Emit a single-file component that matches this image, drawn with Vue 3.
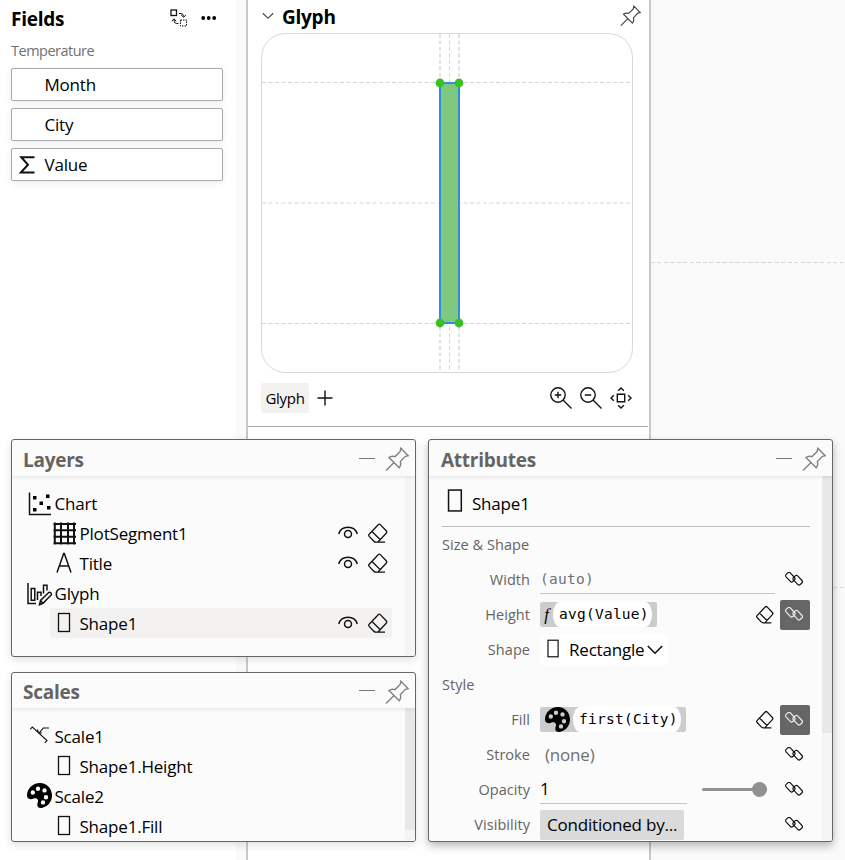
<script setup>
const fields = [
  { name: 'Month', numeric: false },
  { name: 'City', numeric: false },
  { name: 'Value', numeric: true },
]
const layers = [
  { name: 'Chart', icon: 'chart', child: false },
  { name: 'PlotSegment1', icon: 'grid', child: true },
  { name: 'Title', icon: 'letter', child: true },
  { name: 'Glyph', icon: 'glyph', child: false },
  { name: 'Shape1', icon: 'rect', child: true, selected: true },
]
const scales = [
  { name: 'Scale1', icon: 'scale', child: false },
  { name: 'Shape1.Height', icon: 'rect', child: true },
  { name: 'Scale2', icon: 'palette', child: false },
  { name: 'Shape1.Fill', icon: 'rect', child: true },
]
const handles = [[179, 50], [198, 50], [179, 290], [198, 290]]
</script>

<template>
  <svg class="sprite" width="0" height="0">
    <symbol id="pin" viewBox="0 0 24 24">
      <path d="M1 23.500 9 15.500M15.800 1.200 23.300 8.700 20.400 9.300 15.300 14.600Q16.500 18.200 14.200 20.800L4 10.600Q6.300 8.500 10 9.600L15.200 4.400Z" />
    </symbol>
    <symbol id="eye" viewBox="0 0 20 20">
      <path d="M.7 11C2 6.500 5.500 4.200 10 4.200S18 6.500 19.300 11" />
      <circle cx="10" cy="11" r="3.500" />
    </symbol>
    <symbol id="eraser" viewBox="0 0 20 20">
      <path d="M9 19.200H17M10.200 18.700 18.200 10.200Q19.300 9 18.200 7.800L12.300 1.600Q11.300.6 10.200 1.700L1.200 11.200Q.2 12.300 1.200 13.400L5.800 18.200Q6.800 19.200 8 19.200H9.700ZM4 8.500 12.300 16.700" />
    </symbol>
    <symbol id="link" viewBox="0 0 18 14">
      <rect x="0.400" y="2.300" width="9.800" height="5.800" rx="1.800" transform="rotate(47 5.300 5.200)" />
      <rect x="7.800" y="5.300" width="9.800" height="5.800" rx="1.800" transform="rotate(47 12.700 8.200)" />
    </symbol>
    <symbol id="rect" viewBox="0 0 25 25">
      <rect x="6.500" y="3.500" width="11" height="18" />
    </symbol>
    <symbol id="chart" viewBox="0 0 25 25">
      <path d="M2.500 1.500V23.500H24" />
      <path class="solid" d="M6 5h3.500v3.500H6zM6 17h3.500v3.500H6zM12.500 10.500H16V14h-3.500zM19 3.500h3.500V7H19zM20 15h3.500v3.500H20z" />
    </symbol>
    <symbol id="grid" viewBox="0 0 25 25">
      <path d="M2.800 1.500V23.500M9 1.500V23.500M16 1.500V23.500M22 1.500V23.500M1.500 3H24M1.500 9.300H24M1.500 15.800H24M1.500 22.300H24" />
    </symbol>
    <symbol id="letter" viewBox="0 0 25 25">
      <path d="M5 21.500 11.700 2.500H12.300L19 21.500M7.300 15H16.700" />
    </symbol>
    <symbol id="glyph" viewBox="0 0 25 25">
      <path d="M1 2V22.500H9M4.200 7.500H7.800V19.200H4.200ZM10.500 19V11.200H14V15M16.500 12.500V4.200H20V9.500M12.500 23.700 13.500 19.500 21.500 11.700Q22.700 10.700 24 12T23.800 14.300L16 22.300ZM13.500 19.500 16 22.300" />
    </symbol>
    <symbol id="scale" viewBox="0 0 25 25">
      <path d="M3.200 6.300 5.300 4 20 17.500 17.800 19.800M12.500 9.700 16.300 5H22M10.500 6.500 11.500 10H14.800" />
    </symbol>
    <symbol id="palette" viewBox="0 0 25 25">
      <path class="solid" fill-rule="evenodd" d="M13 0C5.500 0 0 5.700 0 12.500C0 16 3.600 17.200 6.500 15.600C9.300 14.300 12 16.300 10.800 19.300C9.600 22.400 10.800 25 13.300 25C20 24.700 25 19.200 25 12.500S20 0 13 0ZM5.800 7.300a2.200 2.200 0 1 1 0 4.400 2.200 2.200 0 0 1 0-4.400ZM11 3.500a2.200 2.200 0 1 1 0 4.400 2.200 2.200 0 0 1 0-4.400ZM17.500 5.200a2.200 2.200 0 1 1 0 4.400 2.200 2.200 0 0 1 0-4.400ZM19 12a2.200 2.200 0 1 1 0 4.400 2.200 2.200 0 0 1 0-4.400ZM16 17.200a2.200 2.200 0 1 1 0 4.400 2.200 2.200 0 0 1 0-4.400Z" />
    </symbol>
  </svg>

  <div class="app">
    <aside class="fields">
      <header class="fields-head">
        <h2>Fields</h2>
        <svg class="swap" width="18" height="18" viewBox="0 0 18 18">
          <rect x="1" y="1" width="5.500" height="5.500" stroke-width="1.300" />
          <path d="M9 4.500H11Q13.500 4.500 13.500 7.500M11.200 6 13.500 8.300 15.800 6M8.500 14.500H6.500Q4 14.500 4 11M1.800 12.300 4 9.800 6.200 12.300" />
          <rect x="10.500" y="11" width="6" height="6" stroke-dasharray="1.500 1" />
        </svg>
        <svg class="dots" width="16" height="4" viewBox="0 0 16 4">
          <circle cx="2.200" cy="2" r="1.900" /><circle cx="7.700" cy="2" r="1.900" /><circle cx="13.200" cy="2" r="1.900" />
        </svg>
      </header>
      <p class="table-name">Temperature</p>
      <div class="field-list">
        <div v-for="f in fields" :key="f.name" class="field">
          <span class="field-icon">
            <svg v-if="f.numeric" width="16" height="18" viewBox="0 0 16 18">
              <path d="M15.500 1.200H2.200L9 8.800 1.800 16.500H15.500" />
            </svg>
          </span>
          <span class="txt">{{ f.name }}</span>
        </div>
      </div>
    </aside>

    <main class="glyph-pane">
      <section class="glyph-editor">
        <header class="glyph-head">
          <svg class="chevron" width="12" height="8" viewBox="0 0 12 8"><path d="M.8 1.200 6 6.200 11.200 1.200" /></svg>
          <h2>Glyph</h2>
          <svg class="icon head-pin" width="21" height="21"><use href="#pin" /></svg>
        </header>
        <svg class="glyph-canvas" width="372" height="340" viewBox="0 0 372 340">
          <rect class="frame" x=".5" y=".5" width="371" height="339" rx="24" />
          <path class="guide" d="M1 49.500H371M1 170H371M1 290.500H371M188.500 1V337" />
          <path class="guide wide" d="M179 1V337M198 1V337" />
          <rect class="mark" x="179" y="50" width="19" height="240" />
          <circle v-for="(h, i) in handles" :key="i" class="handle" :cx="h[0]" :cy="h[1]" r="4.400" />
        </svg>
        <footer class="glyph-tools">
          <span class="tab">Glyph</span>
          <svg class="tool plus" width="16" height="16" viewBox="0 0 16 16"><path d="M8 .5V15.500M.5 8H15.500" /></svg>
          <svg class="tool" width="22" height="22" viewBox="0 0 22 22">
            <circle cx="8" cy="8" r="7.200" /><path d="M13 13 21.500 21.500M4.800 8H11.200M8 4.800V11.200" />
          </svg>
          <svg class="tool" width="22" height="22" viewBox="0 0 22 22">
            <circle cx="8" cy="8" r="7.200" /><path d="M13 13 21.500 21.500M4.800 8H11.200" />
          </svg>
          <svg class="tool" width="22" height="22" viewBox="0 0 22 22">
            <path d="M7.300 7.300H14.700V14.700H7.300ZM8.200 3.800 11 1 13.800 3.800M8.200 18.200 11 21 13.800 18.200M3.800 8.200 1 11 3.800 13.800M18.200 8.200 21 11 18.200 13.800" />
          </svg>
        </footer>
      </section>
    </main>

    <div class="chart-canvas">
      <div class="canvas-guide"></div>
      <div class="canvas-guide"></div>
    </div>

    <section class="window layers">
      <header class="window-head">
        <h2>Layers</h2>
        <span class="minimise"></span>
        <svg class="icon" width="24" height="24"><use href="#pin" /></svg>
      </header>
      <div class="window-body">
        <div class="tree">
          <div v-for="n in layers" :key="n.name" class="node" :class="{ child: n.child, selected: n.selected }">
            <svg class="icon node-icon" :class="n.icon" width="25" height="25"><use :href="'#' + n.icon" /></svg>
            <span class="txt">{{ n.name }}</span>
            <template v-if="n.child">
              <svg class="icon eye" width="20" height="20"><use href="#eye" /></svg>
              <svg class="icon" width="20" height="20"><use href="#eraser" /></svg>
            </template>
          </div>
        </div>
        <div class="track"></div>
      </div>
    </section>

    <section class="window scales">
      <header class="window-head">
        <h2>Scales</h2>
        <span class="minimise"></span>
        <svg class="icon" width="24" height="24"><use href="#pin" /></svg>
      </header>
      <div class="window-body">
        <div class="tree">
          <div v-for="n in scales" :key="n.name" class="node" :class="{ child: n.child }">
            <svg class="icon node-icon" :class="n.icon" width="25" height="25"><use :href="'#' + n.icon" /></svg>
            <span class="txt">{{ n.name }}</span>
          </div>
        </div>
        <div class="track"><div class="thumb"></div></div>
      </div>
    </section>

    <section class="window attributes">
      <header class="window-head">
        <h2>Attributes</h2>
        <span class="minimise"></span>
        <svg class="icon" width="24" height="24"><use href="#pin" /></svg>
      </header>
      <div class="window-body">
        <div class="form">
          <div class="object-name">
            <svg class="icon" width="29" height="29"><use href="#rect" /></svg>
            <span class="txt">Shape1</span>
          </div>
          <div class="group">Size &amp; Shape</div>
          <div class="attr">
            <label>Width</label>
            <div class="control"><span class="input mono muted">(auto)</span></div>
            <span class="bind"><svg class="icon" width="18" height="14"><use href="#link" /></svg></span>
          </div>
          <div class="attr">
            <label>Height</label>
            <div class="control"><span class="expr"><i class="func">f</i><span class="mono code">avg(Value)</span></span></div>
            <svg class="icon clear" width="18" height="19"><use href="#eraser" /></svg>
            <span class="bind bound"><svg class="icon" width="18" height="14"><use href="#link" /></svg></span>
          </div>
          <div class="attr">
            <label>Shape</label>
            <div class="control">
              <span class="select">
                <svg class="icon" width="25" height="23"><use href="#rect" /></svg>
                <span class="txt">Rectangle</span>
                <svg class="caret" width="16" height="10" viewBox="0 0 16 10"><path d="M.8 1 8 8.200 15.200 1" /></svg>
              </span>
            </div>
          </div>
          <div class="group">Style</div>
          <div class="attr">
            <label>Fill</label>
            <div class="control"><span class="expr fill"><svg class="icon palette" width="25" height="25"><use href="#palette" /></svg><span class="mono code">first(City)</span></span></div>
            <svg class="icon clear" width="18" height="19"><use href="#eraser" /></svg>
            <span class="bind bound"><svg class="icon" width="18" height="14"><use href="#link" /></svg></span>
          </div>
          <div class="attr">
            <label>Stroke</label>
            <div class="control"><span class="txt muted none">(none)</span></div>
            <span class="bind"><svg class="icon" width="18" height="14"><use href="#link" /></svg></span>
          </div>
          <div class="attr">
            <label>Opacity</label>
            <div class="control"><span class="input txt">1</span><span class="slider"></span></div>
            <span class="bind"><svg class="icon" width="18" height="14"><use href="#link" /></svg></span>
          </div>
          <div class="attr">
            <label>Visibility</label>
            <div class="control"><span class="button txt">Conditioned by...</span></div>
            <span class="bind"><svg class="icon" width="18" height="14"><use href="#link" /></svg></span>
          </div>
        </div>
        <div class="track"><div class="thumb"></div></div>
      </div>
    </section>
  </div>
</template>

<style>
body { margin: 0; background: #fff; overflow: hidden; }
</style>

<style scoped>
* { box-sizing: border-box; }
.sprite { position: absolute; }
.app {
  position: relative;
  display: flex;
  width: 845px;
  height: 860px;
  overflow: hidden;
  font-family: "Open Sans", "Noto Sans", sans-serif;
  font-size: 17px;
  color: #000;
}
h2 { margin: 0; font-size: 19px; font-weight: 700; letter-spacing: -.25px; line-height: 24px; }
svg { display: block; flex: none; fill: none; stroke: #111; stroke-width: 1.300; }
.solid { fill: #000; stroke: none; }
.txt { letter-spacing: -.2px; white-space: nowrap; }

.fields { width: 248px; padding: 7px 23px 0 11px; border-right: 2px solid #c8c8c8; background: linear-gradient(90deg, #fff 236px, #fafafa 236px); }
.fields-head { display: flex; align-items: center; height: 24px; }
.swap { margin: -2px 13px 0 auto; stroke-width: 1; }
.dots { margin: -2px 6px 0 0; fill: #000; stroke: none; }
.table-name { margin: 9px 0 6px; font-size: 14.500px; line-height: 22px; color: #707070; letter-spacing: -.5px; }
.field-list { display: flex; flex-direction: column; gap: 7px; width: 212px; }
.field { display: flex; align-items: center; height: 33px; border: 1px solid #a9a9a9; border-radius: 2px; background: #fff; box-shadow: 0 2px 7px rgba(0, 0, 0, .08); }
.field-icon { width: 32.500px; padding-left: 7px; }
.field-icon svg { stroke-width: 2; }

.glyph-pane { width: 403px; border-right: 2px solid #c8c8c8; background: #fff; }
.glyph-editor { height: 427px; border-bottom: 1px solid #aaa; margin-right: 1px; padding: 4px 15px 0 13px; }
.glyph-head { display: flex; align-items: center; height: 26px; }
.chevron { margin: -2px 8px 0 1px; stroke: #555; }
.head-pin { margin: -3px -8px 0 auto; stroke: #444; }
.glyph-canvas { margin-top: 3px; }
.frame { stroke: #d8d8d8; stroke-width: 1; }
.guide { stroke: #d6d6d6; stroke-width: 1; stroke-dasharray: 4 2.500; }
.guide.wide { stroke: #e2e2e2; stroke-width: 2; }
.mark { fill: #7fc97f; stroke: #2f8de4; stroke-width: 2; }
.handle { fill: #3abf25; stroke: none; }
.glyph-tools { display: flex; align-items: center; margin: 10px 1px 0 0; height: 30px; gap: 8px; }
.tab { width: 48px; height: 30px; border-radius: 2px; background: #f3f2f1; font-size: 15px; letter-spacing: -.3px; line-height: 30px; text-align: center; }
.tool { stroke-width: 1.400; }
.plus { margin-right: auto; }

.chart-canvas { flex: 1; display: flex; flex-direction: column; gap: 324px; padding-top: 262px; background: #fafafa; }
.canvas-guide { height: 1px; background: repeating-linear-gradient(90deg, #d8d8d8 0 4px, transparent 4px 6.500px); }

.window { position: absolute; left: 11px; width: 405px; display: flex; flex-direction: column; overflow: hidden; border: 1px solid #666; border-radius: 3px; background: #fbfbfb; box-shadow: 0 3px 9px rgba(0, 0, 0, .12); }
.layers { top: 439px; height: 218px; }
.scales { top: 672px; height: 170px; }
.attributes { top: 439px; left: 428px; height: 403px; box-shadow: 0 4px 9px rgba(0, 0, 0, .28); }
.window-head { position: relative; display: flex; align-items: center; flex: none; height: 36px; padding: 2px 6px 0 11px; box-shadow: 0 1px 4px rgba(0, 0, 0, .1); }
.window-head h2 { margin-top: 1px; color: #666462; }
.attributes .window-head h2 { margin-left: 1px; }
.window-head .icon { stroke: #808080; stroke-width: 1.400; }
.scales .window-head { height: 35px; }
.minimise { width: 16px; height: 1px; margin: -2px 10px 0 auto; background: #777; }
.window-body { flex: 1; display: flex; min-height: 0; }
.tree { flex: 1; padding: 12px 13px 0 14px; }
.scales .tree { padding-top: 13px; }
.node { display: flex; align-items: center; height: 30px; padding-left: 1px; border-radius: 2px; }
.node.child { margin-left: 24px; padding: 0 4px 0 2px; }
.node.selected { background: #f3f2f1; }
.node-icon { margin-right: 2.500px; stroke-width: 1.500; }
.node-icon.grid { stroke-width: 2; }
.node-icon.rect { margin-top: -2px; stroke-width: 1.300; }
.node-icon.scale { margin-top: -2px; stroke-width: 1.100; }
.scales .node-icon.palette { margin-top: -2px; }
.eye { margin: 0 10px 0 auto; stroke-width: 1.500; }
.track { flex: none; width: 10px; background: #f5f5f5; }
.thumb { background: #e8e8e8; }
.scales .thumb { height: 122px; }
.attributes .thumb { height: 257px; }

.form { flex: 1; min-width: 0; padding: 12px 12px 0 13px; }
.object-name { display: flex; align-items: center; height: 39px; padding-bottom: 8px; border-bottom: 1px solid #bdbdbd; }
.object-name .icon { margin: -6px 2px 0 -1px; }
.group { height: 35px; font-size: 14.500px; line-height: 35px; color: #666462; letter-spacing: .05px; }
.attr { display: flex; align-items: center; height: 35px; }
.attr label { flex: none; width: 88px; margin-right: 10px; text-align: right; font-size: 14.500px; color: #666462; letter-spacing: .05px; }
.control { flex: 1; min-width: 0; display: flex; align-items: center; height: 30px; }
.mono { font-family: "DejaVu Sans Mono", monospace; font-size: 14.500px; letter-spacing: .25px; white-space: pre; }
.muted { color: #707070; }
.input { flex: none; width: 235px; height: 29px; line-height: 28px; border-bottom: 1px solid #c4c4c4; }
.input.txt { width: 147px; }
.none { padding-left: 5px; }
.bind { flex: none; display: flex; align-items: center; justify-content: center; width: 30px; height: 30px; margin-left: 5px; border-radius: 2px; }
.bind .icon { margin: -1px 0 0 -2px; stroke-width: 1.150; }
.bound { background: #666; }
.bound .icon { stroke: #eee; }
.clear { margin-right: 1px; stroke-width: 1.400; }
.expr { display: flex; align-items: center; height: 25px; padding-right: 5px; border-radius: 2px; background: #ccc; }
.func { width: 13px; font-size: 17px; text-align: center; font-family: "Liberation Serif", serif; }
.expr .code { height: 25px; padding: 0 3px 0 6px; border-radius: 7px / 13px; background: #fff; line-height: 25px; }
.expr.fill .icon { margin: 0 3px 0 5px; }
.select { display: flex; align-items: center; height: 30px; width: 128px; background: #fff; }
.select .icon { margin: -3px 3px 0 1px; }
.caret { margin-left: 3px; stroke-width: 1.600; }
.slider { flex: none; display: flex; align-items: center; width: 65px; height: 3px; margin-left: 15px; border-radius: 2px; background: #919191; }
.slider::after { content: ""; width: 15px; height: 15px; margin-left: auto; border-radius: 50%; background: #919191; }
.button { height: 30px; padding: 0 7px; border-radius: 2px; background: #dadada; line-height: 30px; }
</style>
